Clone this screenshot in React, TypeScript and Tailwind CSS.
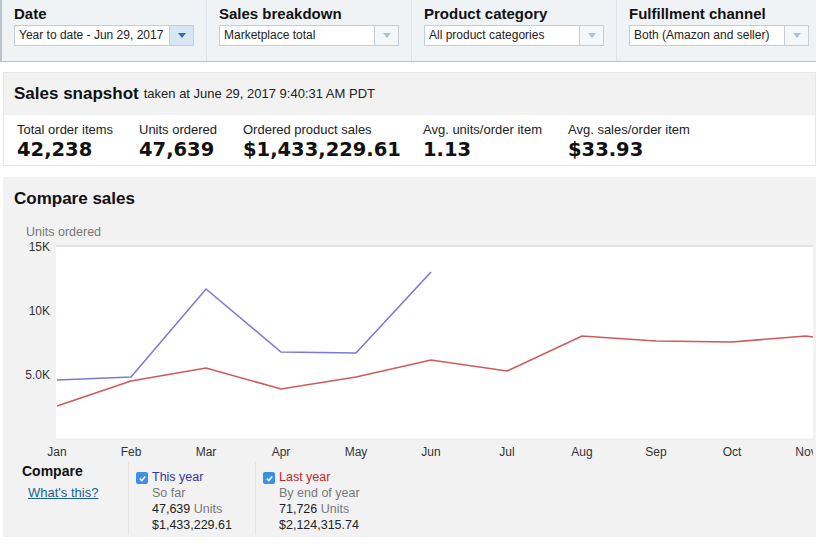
const filters = [
  { label: 'Date', value: 'Year to date - Jun 29, 2017', active: true },
  { label: 'Sales breakdown', value: 'Marketplace total', active: false },
  { label: 'Product category', value: 'All product categories', active: false },
  { label: 'Fulfillment channel', value: 'Both (Amazon and seller)', active: false },
];

const metrics = [
  { label: 'Total order items', value: '42,238', w: 'w-[122px]' },
  { label: 'Units ordered', value: '47,639', w: 'w-[104px]' },
  { label: 'Ordered product sales', value: '$1,433,229.61', w: 'w-[180px]' },
  { label: 'Avg. units/order item', value: '1.13', w: 'w-[145px]' },
  { label: 'Avg. sales/order item', value: '$33.93', w: 'w-[150px]' },
];

const months = ['Jan', 'Feb', 'Mar', 'Apr', 'May', 'Jun', 'Jul', 'Aug', 'Sep', 'Oct', 'Nov'];
const xs = [57, 131, 206, 281, 356, 431, 507, 582, 656, 732, 806];
// y positions relative to the chart svg top (page y 240)
const thisYear = [139, 136, 48, 111, 112, 31];
const lastYear = [165, 140, 127, 148, 136, 119, 130, 95, 100, 101, 95];

function pts(ys: number[]) {
  return ys.map((y, i) => `${xs[i]},${y}`).join(' ');
}

function Check() {
  return (
    <span className="mt-[3px] flex h-[12px] w-[12px] shrink-0 items-center justify-center rounded-[2px] bg-[#3d8fe0]">
      <svg width="9" height="9" viewBox="0 0 10 10">
        <path d="M2 5.2 L4.2 7.4 L8 2.8" stroke="white" strokeWidth="1.8" fill="none" />
      </svg>
    </span>
  );
}

export default function App() {
  return (
    <div className="h-[548px] w-[816px] overflow-hidden bg-white font-['Liberation_Sans',Arial,sans-serif] text-[#111]">
      {/* Filter bar */}
      <div className="flex h-[62px] border-b border-l-2 border-[#b9c2ca] bg-[#eff3f6]">
        {filters.map(f => (
          <div key={f.label} className="w-[205px] shrink-0 border-r border-[#dde3e8] pl-[12px] pt-[5px]">
            <div className="text-[15px] font-bold leading-[18px]">{f.label}</div>
            <div className="mt-[2px] flex h-[21px] w-[180px] border border-[#c6ced5] bg-white">
              <div className="flex-1 truncate pl-[4px] text-[12px] leading-[19px] text-[#222]">{f.value}</div>
              <div className={`flex w-[24px] items-center justify-center border-l border-[#c6ced5] ${f.active ? 'bg-[#d8e6f2]' : 'bg-[#f4f7fa]'}`}>
                <svg width="8" height="5" viewBox="0 0 8 5">
                  <path d="M0 0 L8 0 L4 5 Z" fill={f.active ? '#2f6fae' : '#a9c1d6'} />
                </svg>
              </div>
            </div>
          </div>
        ))}
      </div>

      {/* Sales snapshot */}
      <div className="ml-[3px] mt-[10px] border border-[#e6e6e6]">
        <div className="flex h-[42px] items-center bg-[#f2f2f2] pl-[10px]">
          <span className="text-[17px] font-bold">Sales snapshot</span>
          <span className="ml-[5px] text-[13px] text-[#222]">taken at June 29, 2017 9:40:31 AM PDT</span>
        </div>
        <div className="flex h-[50px] bg-white pl-[13px] pt-[7px]">
          {metrics.map(m => (
            <div key={m.label} className={`${m.w} shrink-0`}>
              <div className="text-[13px] leading-[16px] text-[#222]">{m.label}</div>
              <div className="font-['DejaVu_Sans',Verdana,sans-serif] text-[19.5px] font-bold leading-[24px]">{m.value}</div>
            </div>
          ))}
        </div>
      </div>

      {/* Compare sales */}
      <div className="ml-[3px] mt-[11px] h-[360px] overflow-hidden bg-[#f2f2f2]">
        <div className="pl-[11px] pt-[12px] text-[17px] font-bold leading-[20px]">Compare sales</div>
        <div className="pl-[23px] pt-[16px] text-[12.5px] leading-[15px] text-[#777]">Units ordered</div>

        <svg width="813" height="220" className="-ml-[3px] mt-[1px] block" style={{ fontFamily: 'Liberation Sans, Arial, sans-serif' }}>
          <rect x="56" y="5" width="760" height="193" fill="#ffffff" />
          <line x1="56" y1="5" x2="816" y2="5" stroke="#e2e2e2" strokeWidth="2" />
          <line x1="56" y1="198" x2="816" y2="198" stroke="#e8e8e8" strokeWidth="1" />
          <text x="50" y="10" textAnchor="end" fontSize="12" fill="#333">15K</text>
          <text x="50" y="74" textAnchor="end" fontSize="12" fill="#333">10K</text>
          <text x="50" y="138" textAnchor="end" fontSize="12" fill="#333">5.0K</text>
          <polyline points={pts(lastYear) + ' 820,97'} fill="none" stroke="#d0585a" strokeWidth="1.6" />
          <polyline points={pts(thisYear)} fill="none" stroke="#7c78d6" strokeWidth="1.6" />
          {months.map((m, i) => (
            <text key={m} x={xs[i]} y="215" textAnchor="middle" fontSize="12" fill="#333">{m}</text>
          ))}
        </svg>

        {/* Legend */}
        <div className="flex h-[74px] pt-[1px]">
          <div className="w-[125px] shrink-0 pl-[19px]">
            <div className="text-[14px] font-bold leading-[18px]">Compare</div>
            <a className="ml-[6px] text-[13px] leading-[18px] text-[#1a5e93] underline">What's this?</a>
          </div>
          {[
            { title: 'This year', color: 'text-[#3a31a6]', sub: 'So far', units: '47,639', sales: '$1,433,229.61' },
            { title: 'Last year', color: 'text-[#c0282d]', sub: 'By end of year', units: '71,726', sales: '$2,124,315.74' },
          ].map(c => (
            <div key={c.title} className="flex w-[127px] shrink-0 gap-[4px] border-l border-[#e4e4e4] pl-[7px] pt-[7px] text-[12.5px] leading-[16px]">
              <Check />
              <div>
                <div className={`${c.color}`}>{c.title}</div>
                <div className="text-[#777]">{c.sub}</div>
                <div className="text-[#222]">
                  {c.units} <span className="text-[#777]">Units</span>
                </div>
                <div className="text-[#222]">{c.sales}</div>
              </div>
            </div>
          ))}
        </div>
      </div>
    </div>
  );
}
